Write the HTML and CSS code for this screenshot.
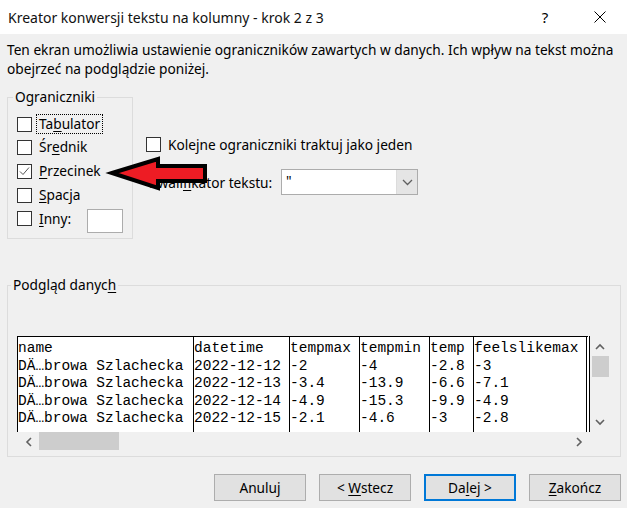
FILE: index.html
```html
<!DOCTYPE html>
<html lang="pl">
<head>
<meta charset="utf-8">
<link rel="stylesheet" href="styles.css">
</head>
<body>
<div class="titlebar">
  <span class="title">Kreator konwersji tekstu na kolumny - krok 2 z 3</span>
  <span class="help">?</span>
  <svg class="close" width="12" height="12" viewBox="0 0 12 12"><path d="M0.5 0.5 L11.5 11.5 M11.5 0.5 L0.5 11.5" stroke="#000" stroke-width="1" fill="none"/></svg>
</div>
<p class="desc">Ten ekran umożliwia ustawienie ograniczników zawartych w danych. Ich wpływ na tekst można<br>obejrzeć na podglądzie poniżej.</p>
<div class="top">
  <fieldset class="group delims">
    <legend>Ograniczniki</legend>
    <div class="row r1"><span class="cb"></span><span class="lbl focus">Ta<u>b</u>ulator</span></div>
    <div class="row r2"><span class="cb"></span><span class="lbl">Śr<u>e</u>dnik</span></div>
    <div class="row"><span class="cb checked"><svg width="13" height="13" viewBox="0 0 13 13"><path d="M2 6.5 L5 9.5 L11 2.5" stroke="#555" stroke-width="1" fill="none"/></svg></span><span class="lbl"><u>P</u>rzecinek</span></div>
    <div class="row"><span class="cb"></span><span class="lbl"><u>S</u>pacja</span></div>
    <div class="row inny"><span class="cb"></span><span class="lbl"><u>I</u>nny:</span><span class="tb"></span></div>
  </fieldset>
  <div class="opts">
    <div class="row kolejne"><span class="cb"></span><span class="lbl">Kole<u>j</u>ne ograniczniki traktuj jako jeden</span></div>
    <div class="qual">
      <span class="qlbl">Kwali<u>f</u>ikator tekstu:</span>
      <div class="combo"><span class="val">"</span><span class="drop"><svg width="11" height="7" viewBox="0 0 11 7"><path d="M1 1 L5.5 5.5 L10 1" stroke="#606060" stroke-width="1.3" fill="none"/></svg></span></div>
    </div>
  </div>
</div>
<fieldset class="group preview">
  <legend>Podgląd danyc<u>h</u></legend>
  <div class="pv">
    <div class="tbl">
      <div class="col c1">name<br>DÄ…browa Szlachecka<br>DÄ…browa Szlachecka<br>DÄ…browa Szlachecka<br>DÄ…browa Szlachecka</div>
      <div class="col c2">datetime<br>2022-12-12<br>2022-12-13<br>2022-12-14<br>2022-12-15</div>
      <div class="col c3">tempmax<br>-2<br>-3.4<br>-4.9<br>-2.1</div>
      <div class="col c4">tempmin<br>-4<br>-13.9<br>-15.3<br>-4.6</div>
      <div class="col c5">temp<br>-2.8<br>-6.6<br>-9.9<br>-3</div>
      <div class="col c6">feelslikemax<br>-3<br>-7.1<br>-4.9<br>-2.8</div>
    </div>
    <div class="vscroll">
      <span class="sbtn"><svg width="10" height="7" viewBox="0 0 10 7"><path d="M1 6 L5 2 L9 6" stroke="#606060" stroke-width="1.6" fill="none"/></svg></span>
      <span class="vthumb"></span>
      <span class="vspace"></span>
      <span class="sbtn"><svg width="10" height="7" viewBox="0 0 10 7"><path d="M1 1 L5 5 L9 1" stroke="#606060" stroke-width="1.6" fill="none"/></svg></span>
    </div>
    <div class="hscroll">
      <span class="hbtn"><svg width="7" height="10" viewBox="0 0 7 10"><path d="M6 1 L2 5 L6 9" stroke="#606060" stroke-width="1.6" fill="none"/></svg></span>
      <span class="hthumb"></span>
      <span class="hspace"></span>
      <span class="hbtn"><svg width="7" height="10" viewBox="0 0 7 10"><path d="M1 1 L5 5 L1 9" stroke="#606060" stroke-width="1.6" fill="none"/></svg></span>
    </div>
  </div>
</fieldset>
<div class="buttons">
  <span class="btn"><span>Anuluj</span></span>
  <span class="btn"><span>&lt; <u>W</u>stecz</span></span>
  <span class="btn default"><span>Da<u>l</u>ej &gt;</span></span>
  <span class="btn"><span><u>Z</u>akończ</span></span>
</div>
<svg class="arrow" width="115" height="45" viewBox="100 150 115 45"><polygon points="112,173 158,159 158,166 205,166 205,181 158,181 158,188" fill="#ed1c24" stroke="#000" stroke-width="4" stroke-linejoin="miter"/></svg>
</body>
</html>
```
FILE: styles.css
```css
html, body {
  margin: 0;
  padding: 0;
}
body {
  width: 627px;
  height: 508px;
  overflow: hidden;
  position: relative;
  background: #f0f0f0;
  font-family: "Noto Sans", "Open Sans", sans-serif;
  font-size: 13.7px;
  color: #000;
}
u {
  text-decoration: underline;
  text-underline-offset: 2px;
}
.titlebar {
  height: 34px;
  background: #fff;
  display: flex;
  align-items: center;
  padding-left: 8px;
  padding-right: 21px;
  font-size: 14px;
}
.title {
  flex: 1;
  color: #111;
}
.help {
  width: 20px;
  text-align: center;
  font-size: 15px;
  margin-right: 39px;
}
.close {
  display: block;
}
.desc {
  margin: 6px 0 0 7px;
  line-height: 19px;
}
.top {
  display: flex;
  align-items: flex-start;
  margin-top: 11px;
}
.group {
  margin: 0;
  border: 1px solid #dcdcdc;
  min-width: 0;
  box-sizing: border-box;
}
.group legend {
  line-height: 16px;
  padding: 0 2px;
}
.delims {
  margin-left: 7px;
  width: 126px;
  padding: 0 9px 5px 9px;
}
.delims legend {
  margin-left: -4px;
}
.row {
  display: flex;
  align-items: center;
  height: 20px;
}
.cb {
  width: 15px;
  height: 15px;
  box-sizing: border-box;
  border: 1px solid #333;
  background: #fff;
  margin-right: 5px;
  flex: none;
  display: flex;
  align-items: center;
  justify-content: center;
}
.lbl {
  padding: 0 2px;
  line-height: 18px;
  white-space: nowrap;
}
.focus {
  outline: 1px dotted #000;
  outline-offset: 0px;
}
.r1 {
  margin-top: 9px;
}
.row + .row {
  margin-top: 4px;
}
.row.r2 {
  margin-top: 3px;
}
.inny {
  height: 24px;
  align-items: flex-start;
}
.inny .cb {
  margin-top: 2px;
}
.inny .lbl {
  line-height: 20px;
}
.tb {
  margin-left: auto;
  width: 36px;
  height: 24px;
  box-sizing: border-box;
  background: #fff;
  border: 1px solid #acacac;
}
.opts {
  margin-left: 13px;
}
.kolejne {
  margin-top: 45.5px;
}
.qual {
  display: flex;
  align-items: center;
  margin-top: 14.5px;
  height: 26px;
}
.qlbl {
  margin-left: 3px;
  width: 132px;
  white-space: nowrap;
}
.combo {
  width: 137px;
  height: 26px;
  box-sizing: border-box;
  border: 1px solid #acacac;
  background: #fff;
  display: flex;
}
.val {
  flex: 1;
  padding-left: 4px;
  line-height: 22px;
}
.drop {
  width: 20px;
  background: #e5e5e5;
  border-left: 1px solid #dcdcdc;
  display: flex;
  align-items: center;
  justify-content: center;
}
.preview {
  margin: 38px 6px 0 7px;
  padding: 0 9px 5px 9px;
}
.preview legend {
  margin-left: -6px;
}
.pv {
  margin-top: 43px;
  display: grid;
  grid-template-columns: 573px 20px;
  grid-template-rows: 96px 19px;
}
.tbl {
  background: #fff;
  border-left: 1px solid #000;
  border-top: 1px solid #000;
  border-right: 4px double #000;
  display: flex;
  overflow: hidden;
  font-family: "Liberation Mono", monospace;
  font-size: 14.5px;
  line-height: 17.5px;
}
.col {
  padding-top: 3px;
  white-space: nowrap;
  overflow: hidden;
  flex: none;
}
.col + .col {
  border-left: 1px solid #000;
}
.c1 { width: 175px; }
.c2 { width: 95px; }
.c3 { width: 69px; }
.c4 { width: 69px; }
.c5 { width: 43px; }
.c6 { flex: 1; }
.vscroll {
  display: flex;
  flex-direction: column;
  align-items: center;
}
.sbtn {
  height: 20px;
  display: flex;
  align-items: center;
  justify-content: center;
}
.vthumb {
  width: 17px;
  height: 21px;
  background: #cdcdcd;
  margin-left: 1px;
}
.vspace {
  flex: 1;
}
.hscroll {
  display: flex;
  align-items: stretch;
}
.hbtn {
  width: 22px;
  display: flex;
  align-items: center;
  justify-content: center;
}
.hthumb {
  width: 80px;
  height: 18px;
  background: #cdcdcd;
}
.hspace {
  flex: 1;
}
.buttons {
  display: flex;
  justify-content: flex-end;
  gap: 13px;
  margin-top: 17px;
  padding-right: 6px;
}
.btn {
  width: 92px;
  height: 27px;
  box-sizing: border-box;
  border: 1px solid #adadad;
  background: #e1e1e1;
  display: flex;
  align-items: center;
  justify-content: center;
  white-space: pre;
}
.btn.default {
  border: 2px solid #0078d7;
}
.arrow {
  position: absolute;
  left: 100px;
  top: 150px;
}
```
